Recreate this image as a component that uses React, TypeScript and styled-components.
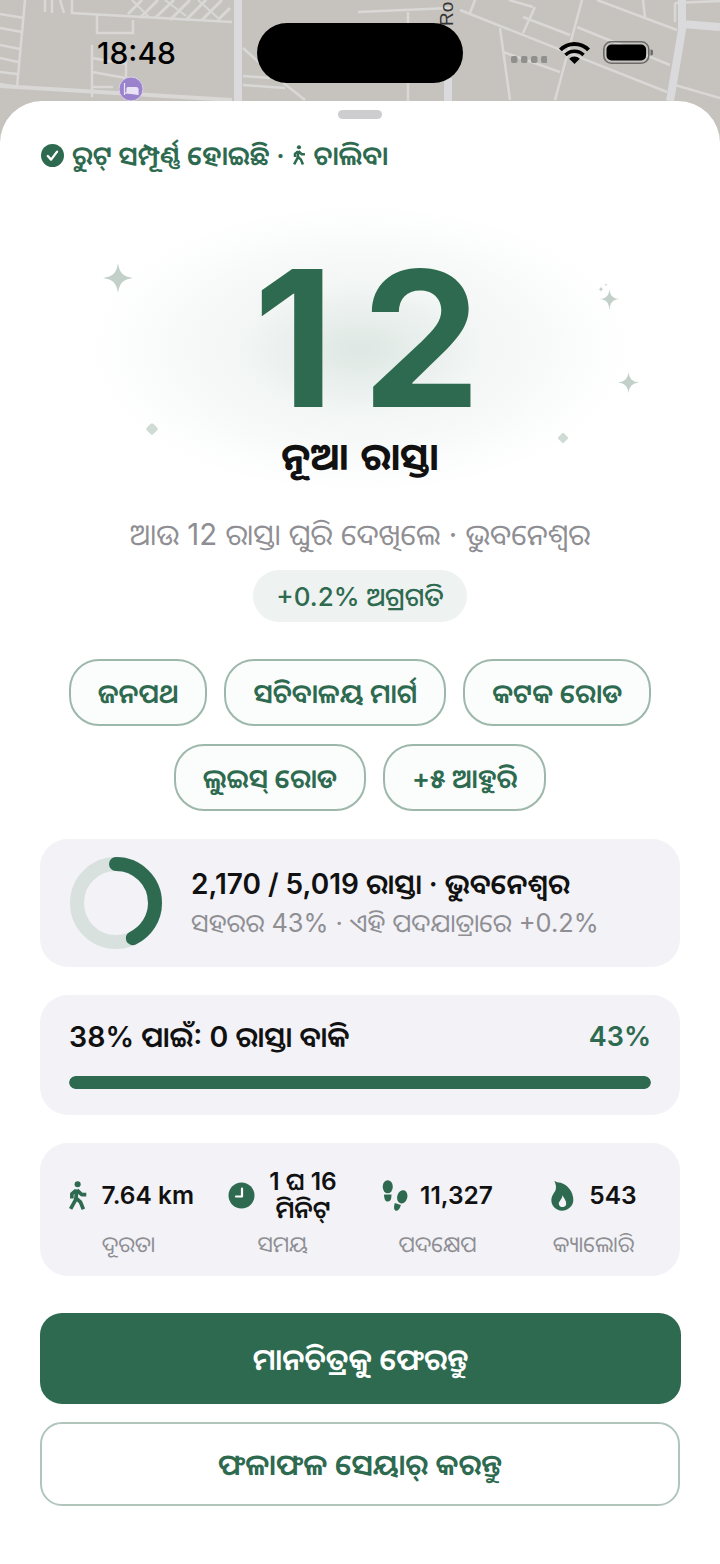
import styled, { createGlobalStyle } from "styled-components";

const GREEN = "#2e6a50";
const INK = "#111111";
const MUTED = "#8e8e93";
const CARD = "#f2f2f7";
const FONT = `Inter, "Noto Sans Oriya", "Lohit Odia", "Noto Sans", sans-serif`;

const Global = createGlobalStyle`
  html, body { margin: 0; padding: 0; background: #fff; }
  body { font-family: ${FONT}; }
`;

const Page = styled.div`
  position: relative;
  width: 720px;
  height: 1564px;
  overflow: hidden;
  background: #c6c3be;
`;

const MapLayer = styled.svg`
  position: absolute;
  left: 0;
  top: 0;
`;

const StatusBar = styled.div`
  position: relative;
  height: 101px;
  display: flex;
  justify-content: space-between;
  padding: 35px 67px 0 97px;
  box-sizing: border-box;
`;

const Clock = styled.div`
  font-size: 30px;
  font-weight: 500;
  line-height: 36px;
  color: #000;
`;

const Island = styled.div`
  position: absolute;
  left: 257px;
  top: 23px;
  width: 206px;
  height: 60px;
  border-radius: 30px;
  background: #000;
`;

const StatusIcons = styled.div`
  display: flex;
  align-items: flex-start;
  gap: 12px;
  padding-top: 6px;
`;

const Sheet = styled.div`
  position: relative;
  height: 1463px;
  background: #fff;
  border-radius: 42px 42px 0 0;
`;

const Handle = styled.div`
  width: 44px;
  height: 9px;
  border-radius: 5px;
  background: #cdcdcf;
  margin: 0 auto;
  position: relative;
  top: 9px;
`;

const RouteHeader = styled.div`
  display: flex;
  align-items: center;
  gap: 8px;
  padding: 30px 0 0 41px;
  height: 30px;
  font-size: 26.5px;
  font-weight: 600;
  color: ${GREEN};
  line-height: 30px;
`;

const Hero = styled.div`
  position: relative;
  height: 309px;
  text-align: center;
`;

const Glow = styled.div`
  position: absolute;
  left: 90px;
  top: 34px;
  width: 540px;
  height: 290px;
  background: radial-gradient(
    closest-side,
    rgba(46, 106, 80, 0.16) 0%,
    rgba(46, 106, 80, 0.06) 45%,
    rgba(46, 106, 80, 0) 100%
  );
`;

const Count = styled.div`
  position: relative;
  font-size: 189px;
  font-weight: 700;
  line-height: 140px;
  letter-spacing: 27px;
  color: ${GREEN};
  padding: 99px 0 0 41px;
`;

const Sparkle = styled.svg<{ $x: number; $y: number }>`
  position: absolute;
  left: ${(p) => p.$x}px;
  top: ${(p) => p.$y}px;
`;

const HeroTitle = styled.div`
  position: relative;
  font-size: 38px;
  font-weight: 700;
  line-height: 46px;
  word-spacing: 3px;
  color: ${INK};
  margin-top: 24px;
`;

const Subtitle = styled.div`
  text-align: center;
  font-size: 29.4px;
  line-height: 36px;
  color: ${MUTED};
  margin-top: 38px;
`;

const GainPill = styled.div`
  width: fit-content;
  margin: 17px auto 0;
  height: 52px;
  padding: 0 23px;
  display: flex;
  align-items: center;
  border-radius: 26px;
  background: #eef2f0;
  font-size: 26px;
  font-weight: 500;
  color: ${GREEN};
`;

const Chips = styled.div`
  display: flex;
  flex-wrap: wrap;
  justify-content: center;
  gap: 18px 17px;
  margin: 37px 60px 0;
`;

const Chip = styled.div`
  height: 67px;
  box-sizing: border-box;
  padding: 0 27px;
  display: flex;
  align-items: center;
  border: 2px solid #9db8ab;
  border-radius: 30px;
  background: #fbfdfc;
  font-size: 26.7px;
  font-weight: 600;
  color: ${GREEN};
`;

const Card = styled.div<{ $height: number; $top: number }>`
  box-sizing: border-box;
  height: ${(p) => p.$height}px;
  margin: ${(p) => p.$top}px 40px 0;
  background: ${CARD};
  border-radius: 28px;
`;

const RingCard = styled(Card)`
  display: flex;
  align-items: center;
  gap: 29px;
  padding-left: 30px;
`;

const RingText = styled.div`
  display: flex;
  flex-direction: column;
  gap: 4px;
`;

const StrongLine = styled.div<{ $size: number }>`
  font-size: ${(p) => p.$size}px;
  font-weight: 600;
  line-height: 35px;
  color: ${INK};
`;

const FaintLine = styled.div`
  font-size: 25.4px;
  line-height: 34px;
  color: ${MUTED};
`;

const GoalCard = styled(Card)`
  padding: 24px 29px 0;
`;

const GoalRow = styled.div`
  display: flex;
  justify-content: space-between;
  align-items: center;
`;

const GoalPercent = styled.div`
  font-size: 27px;
  font-weight: 600;
  color: ${GREEN};
  line-height: 35px;
`;

const Track = styled.div`
  height: 13px;
  border-radius: 7px;
  background: #d8e2dd;
  margin-top: 22px;
  overflow: hidden;
`;

const Fill = styled.div`
  height: 100%;
  border-radius: 7px;
  background: ${GREEN};
`;

const StatsCard = styled(Card)`
  display: grid;
  grid-template-columns: 155px 153px 157px 155px;
  padding: 17px 10px 0 11px;
`;

const Stat = styled.div`
  display: grid;
  grid-template-rows: 70px auto;
  justify-items: center;
`;

const StatValue = styled.div<{ $gap: number; $inset?: number }>`
  display: flex;
  align-items: center;
  gap: ${(p) => p.$gap}px;
  padding-left: ${(p) => p.$inset ?? 0}px;
  font-size: 24.5px;
  font-weight: 600;
  line-height: 28px;
  color: ${INK};
  text-align: center;
`;

const StatLabel = styled.div`
  font-size: 22px;
  line-height: 28px;
  color: ${MUTED};
`;

const PrimaryButton = styled.div`
  height: 91px;
  margin: 37px 39px 0 40px;
  display: flex;
  align-items: center;
  justify-content: center;
  border-radius: 22px;
  background: ${GREEN};
  color: #fff;
  font-size: 29.8px;
  font-weight: 600;
`;

const SecondaryButton = styled.div`
  box-sizing: border-box;
  height: 84px;
  margin: 18px 40px 0;
  display: flex;
  align-items: center;
  justify-content: center;
  border: 2px solid #b0c6bb;
  border-radius: 22px;
  color: ${GREEN};
  font-size: 29.3px;
  font-weight: 600;
`;

const star = "M12 0 C13.200 8 16 10.800 24 12 C16 13.200 13.200 16 12 24 C10.800 16 8 13.200 0 12 C8 10.800 10.800 8 12 0 Z";

const MapDrawing = () => (
  <MapLayer width="720" height="140" viewBox="0 0 720 140">
    <g fill="none" stroke="#d9d8d6" strokeWidth="2.500">
      <path d="M0 14L24 18M0 28L22 32M0 45L20 49M0 58L18 62M0 72L17 74M0 84L17 87M25 0L17 87" />
      <path d="M45 0V12M52 0V13M60 0L64 13M72 0V13L232 22M97 14V33L133 33V20" />
      <path d="M92 45V97M126 60V85M92 58L126 64M92 72L126 78M92 87H113" />
      <path d="M128 14L142 0M140 18L158 0M155 18L174 0M170 20L190 0M186 20L206 0M202 20L222 0M218 20L230 8" strokeWidth="3" />
      <path d="M132 0L150 18M165 0L186 16M198 0L218 18" strokeWidth="2" />
      <path d="M243 48L272 74L305 100M243 76L270 78M243 85L285 88" />
      <path d="M358 12L450 8M408 12V101" />
      <path d="M460 10L667 92M475 0L470 13M509 0L533 7M535 7L523 33M523 17L570 35M582 0L555 100M577 27L670 65M597 0L677 30M643 0L645 18M500 28L510 100M503 52L560 72M675 85L720 98M675 3V22M675 3L720 1" />
    </g>
    <path d="M0 86L232 100" fill="none" stroke="#d9d8d6" strokeWidth="4" />
    <path d="M238 0V101M448 78V101M682 0V30L670 101M682 24L720 27" stroke="#dadadd" strokeWidth="8" fill="none" />
    <text x="0" y="0" transform="translate(453 26) rotate(-90)" fontFamily="Liberation Sans, sans-serif" fontSize="19" fill="#333">Ro</text>
    <circle cx="131" cy="89" r="12" fill="#9a83cc" stroke="#d9d1ea" strokeWidth="1" />
    <path d="M124.500 83v12M124.500 93h13.500v2M127 90v-1.500a1 1 0 0 1 1-1h8a2 2 0 0 1 2 2v3.500h-11z" fill="#e9e3f5" stroke="#e9e3f5" strokeWidth="1.200" />
  </MapLayer>
);

const Wifi = () => (
  <svg width="31" height="23" viewBox="0 0 31 23" fill="#000">
    <path d="M0 7.400A22 22 0 0 1 31 7.400L28.200 10.200A18 18 0 0 0 2.800 10.200Z" />
    <path d="M5.250 12.750A14.500 14.500 0 0 1 25.750 12.750L23.300 15.200A11 11 0 0 0 7.700 15.200Z" />
    <path d="M10.200 17.700A7.500 7.500 0 0 1 20.800 17.700L15.500 23Z" />
  </svg>
);

const Battery = () => (
  <svg width="51" height="23" viewBox="-1 0 51 23">
    <rect x="0.800" y="0.800" width="45" height="21.400" rx="7.500" fill="none" stroke="#6c6c6c" strokeWidth="1.600" />
    <rect x="3.500" y="3.500" width="39.600" height="16" rx="5" fill="#000" />
    <path d="M47.500 8.500v6a3 3 0 0 0 0-6z" fill="#6c6c6c" />
  </svg>
);

const Dots = () => (
  <svg width="36" height="8" viewBox="0 0 36 8" style={{ marginTop: 15 }}>
    {[0, 10, 20, 30].map((x) => (
      <rect key={x} x={x} y="0" width="6.500" height="7" rx="2" fill="#8f8f8d" />
    ))}
  </svg>
);

const CheckBadge = () => (
  <svg width="23" height="23" viewBox="0 0 23 23">
    <circle cx="11.500" cy="11.500" r="11.500" fill={GREEN} />
    <path d="M6.800 12l3.300 3.600 6-8" fill="none" stroke="#fff" strokeWidth="2.300" strokeLinecap="round" strokeLinejoin="round" />
  </svg>
);

const Walker = ({ height }: { height: number }) => (
  <svg width={height * 0.64} height={height} viewBox="25 42 58 90">
    <circle cx="52" cy="52" r="9.500" fill={GREEN} />
    <path
      d="M50 68L46 100M50 70L65 84H79M47 71L34 82V96M46 100L30 129M48 96L61 108L70 130"
      fill="none"
      stroke={GREEN}
      strokeWidth="11.500"
      strokeLinecap="butt"
      strokeLinejoin="round"
    />
  </svg>
);

const ClockIcon = () => (
  <svg width="27" height="27" viewBox="0 0 27 27">
    <circle cx="13.500" cy="13.500" r="13" fill={GREEN} />
    <path d="M14 6.500v8H8" fill="none" stroke="#fff" strokeWidth="2.200" strokeLinecap="round" strokeLinejoin="round" />
  </svg>
);

const FootIcon = () => (
  <svg width="27" height="31" viewBox="25 28 80 92" fill={GREEN}>
    <ellipse cx="42" cy="48" rx="15" ry="19.500" />
    <path d="M31 71H53C53 78 53 92 42 92C33 92 31 80 31 71Z" />
    <ellipse cx="85" cy="78" rx="15" ry="20" transform="rotate(16 85 78)" />
    <path d="M63 96L81 102C78 112 74 120 67 119C59 118 60 106 63 96Z" />
  </svg>
);

const FlameIcon = () => (
  <svg width="24" height="32" viewBox="20 25 72 96">
    <path d="M33 30C40 36 44 34 52 36C72 42 90 62 90 88C90 108 72 120 56 120C38 120 24 106 24 88C24 76 30 70 36 60C40 50 38 42 33 30Z" fill={GREEN} />
    <path d="M58 74C63 86 71 92 68 103C64 111 50 112 47 102C44 93 55 89 58 74Z" fill="#f2f2f7" />
  </svg>
);

const Ring = () => (
  <svg width="92" height="92" viewBox="0 0 92 92">
    <circle cx="46" cy="46" r="39" fill="none" stroke="#d9e1de" strokeWidth="14" />
    <circle
      cx="46"
      cy="46"
      r="39"
      fill="none"
      stroke={GREEN}
      strokeWidth="14"
      strokeLinecap="round"
      strokeDasharray="105 300"
      transform="rotate(-90 46 46)"
    />
  </svg>
);

export default function App() {
  return (
    <Page lang="or">
      <Global />
      <MapDrawing />
      <StatusBar>
        <Clock>18:48</Clock>
        <Island />
        <StatusIcons>
          <Dots />
          <Wifi />
          <Battery />
        </StatusIcons>
      </StatusBar>
      <Sheet>
        <Handle />
        <RouteHeader>
          <CheckBadge />
          <span>ରୁଟ୍ ସମ୍ପୂର୍ଣ୍ଣ ହୋଇଛି · </span>
          <Walker height={20} />
          <span>ଚାଲିବା</span>
        </RouteHeader>
        <Hero>
          <Glow />
          <Sparkle $x={103} $y={93} width="30" height="30" viewBox="0 0 24 24">
            <path d={star} fill="#c2d0c9" />
          </Sparkle>
          <Sparkle $x={596} $y={113} width="26" height="30" viewBox="0 0 26 30">
            <path d="M13.500 6c.7 6.500 3 9.500 10 10-7 .5-9.300 3.500-10 11-.7-7.500-3-10.500-10-11 7-.5 9.300-3.500 10-10z" fill="#c2d0c9" />
            <path d="M5 3c.2 2.200 1 3 3 3.200C6 6.400 5.200 7.200 5 9.500 4.800 7.200 4 6.400 2 6.200 4 6 4.800 5.200 5 3z" fill="#c2d0c9" />
            <path d="M10 0c.1 1.200.5 1.600 1.500 1.700C10.500 1.800 10.100 2.200 10 3.500 9.900 2.200 9.500 1.800 8.500 1.700 9.500 1.600 9.900 1.200 10 0z" fill="#c2d0c9" />
          </Sparkle>
          <Sparkle $x={618} $y={202} width="21" height="21" viewBox="0 0 24 24">
            <path d={star} fill="#c2d0c9" />
          </Sparkle>
          <Sparkle $x={144} $y={251} width="16" height="16" viewBox="0 0 14 14">
            <rect x="3" y="3" width="8" height="8" rx="1.500" transform="rotate(45 7 7)" fill="#cfdbd5" />
          </Sparkle>
          <Sparkle $x={556} $y={261} width="14" height="14" viewBox="0 0 14 14">
            <rect x="3" y="3" width="8" height="8" rx="1.500" transform="rotate(45 7 7)" fill="#cfdbd5" />
          </Sparkle>
          <Count>12</Count>
          <HeroTitle>ନୂଆ ରାସ୍ତା</HeroTitle>
        </Hero>
        <Subtitle>ଆଉ 12 ରାସ୍ତା ଘୁରି ଦେଖିଲେ · ଭୁବନେଶ୍ୱର</Subtitle>
        <GainPill>+0.2% ଅଗ୍ରଗତି</GainPill>
        <Chips>
          <Chip>ଜନପଥ</Chip>
          <Chip>ସଚିବାଳୟ ମାର୍ଗ</Chip>
          <Chip>କଟକ ରୋଡ</Chip>
          <Chip>ଲୁଇସ୍ ରୋଡ</Chip>
          <Chip>+୫ ଆହୁରି</Chip>
        </Chips>
        <RingCard $height={128} $top={28}>
          <Ring />
          <RingText>
            <StrongLine $size={28}>2,170 / 5,019 ରାସ୍ତା · ଭୁବନେଶ୍ୱର</StrongLine>
            <FaintLine>ସହରର 43% · ଏହି ପଦଯାତ୍ରାରେ +0.2%</FaintLine>
          </RingText>
        </RingCard>
        <GoalCard $height={120} $top={28}>
          <GoalRow>
            <StrongLine $size={28.5}>38% ପାଇଁ: 0 ରାସ୍ତା ବାକି</StrongLine>
            <GoalPercent>43%</GoalPercent>
          </GoalRow>
          <Track>
            <Fill />
          </Track>
        </GoalCard>
        <StatsCard $height={133} $top={28}>
          <Stat>
            <StatValue $gap={14} $inset={6}>
              <Walker height={29} />
              7.64 km
            </StatValue>
            <StatLabel>ଦୂରତା</StatLabel>
          </Stat>
          <Stat>
            <StatValue $gap={14}>
              <ClockIcon />
              <span>
                1 ଘ 16
                <br />
                ମିନିଟ୍
              </span>
            </StatValue>
            <StatLabel>ସମୟ</StatLabel>
          </Stat>
          <Stat>
            <StatValue $gap={11}>
              <FootIcon />
              11,327
            </StatValue>
            <StatLabel>ପଦକ୍ଷେପ</StatLabel>
          </Stat>
          <Stat>
            <StatValue $gap={15}>
              <FlameIcon />
              543
            </StatValue>
            <StatLabel>କ୍ୟାଲୋରି</StatLabel>
          </Stat>
        </StatsCard>
        <PrimaryButton>ମାନଚିତ୍ରକୁ ଫେରନ୍ତୁ</PrimaryButton>
        <SecondaryButton>ଫଳାଫଳ ସେୟାର୍ କରନ୍ତୁ</SecondaryButton>
      </Sheet>
    </Page>
  );
}
